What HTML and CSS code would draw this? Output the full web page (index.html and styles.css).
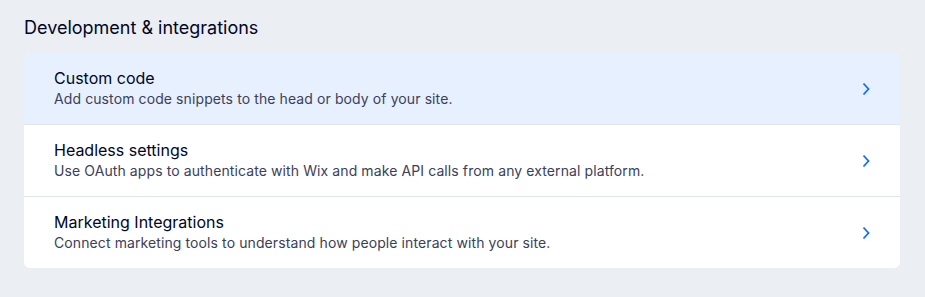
FILE: index.html
```html
<!DOCTYPE html>
<html>
<head>
<meta charset="utf-8">
<link rel="stylesheet" href="styles.css">
</head>
<body>
<section class="section">
  <h2 class="section-title">Development &amp; integrations</h2>
  <div class="card">
    <div class="row row-active">
      <div class="row-text">
        <div class="row-title">Custom code</div>
        <div class="row-desc">Add custom code snippets to the head or body of your site.</div>
      </div>
      <svg class="chevron" width="8" height="14" viewBox="0 0 8 14"><path d="M1.5 1.5 L6.5 7 L1.5 12.5" fill="none" stroke="#116dff" stroke-width="1.8"/></svg>
    </div>
    <div class="row">
      <div class="row-text">
        <div class="row-title">Headless settings</div>
        <div class="row-desc">Use OAuth apps to authenticate with Wix and make API calls from any external platform.</div>
      </div>
      <svg class="chevron" width="8" height="14" viewBox="0 0 8 14"><path d="M1.5 1.5 L6.5 7 L1.5 12.5" fill="none" stroke="#116dff" stroke-width="1.8"/></svg>
    </div>
    <div class="row">
      <div class="row-text">
        <div class="row-title">Marketing Integrations</div>
        <div class="row-desc">Connect marketing tools to understand how people interact with your site.</div>
      </div>
      <svg class="chevron" width="8" height="14" viewBox="0 0 8 14"><path d="M1.5 1.5 L6.5 7 L1.5 12.5" fill="none" stroke="#116dff" stroke-width="1.8"/></svg>
    </div>
  </div>
</section>
</body>
</html>
```
FILE: styles.css
```css
html, body {
  margin: 0;
  padding: 0;
  background: #ebeef3;
}
body {
  font-family: "Inter", "Noto Sans", sans-serif;
  color: #000624;
}
.section {
  width: 876px;
  padding: 16px 0 0 24px;
}
.section-title {
  margin: 0;
  font-size: 18px;
  font-weight: 400;
  line-height: 24px;
  height: 37px;
}
.card {
  background: #fff;
  border-radius: 6px;
  overflow: hidden;
}
.row {
  display: flex;
  align-items: center;
  justify-content: space-between;
  height: 71px;
  padding: 0 30px 0 30px;
  border-top: 1px solid #dfe5eb;
}
.row:first-child {
  border-top: none;
}
.row-active {
  background: #e7f0ff;
}
.row-text {
  display: flex;
  flex-direction: column;
  gap: 1px;
}
.row-title {
  font-size: 16px;
  line-height: 20px;
  color: #000624;
}
.row-desc {
  font-size: 14px;
  line-height: 20px;
  letter-spacing: 0.1px;
  color: #3b4057;
}
.chevron {
  display: block;
}
```
